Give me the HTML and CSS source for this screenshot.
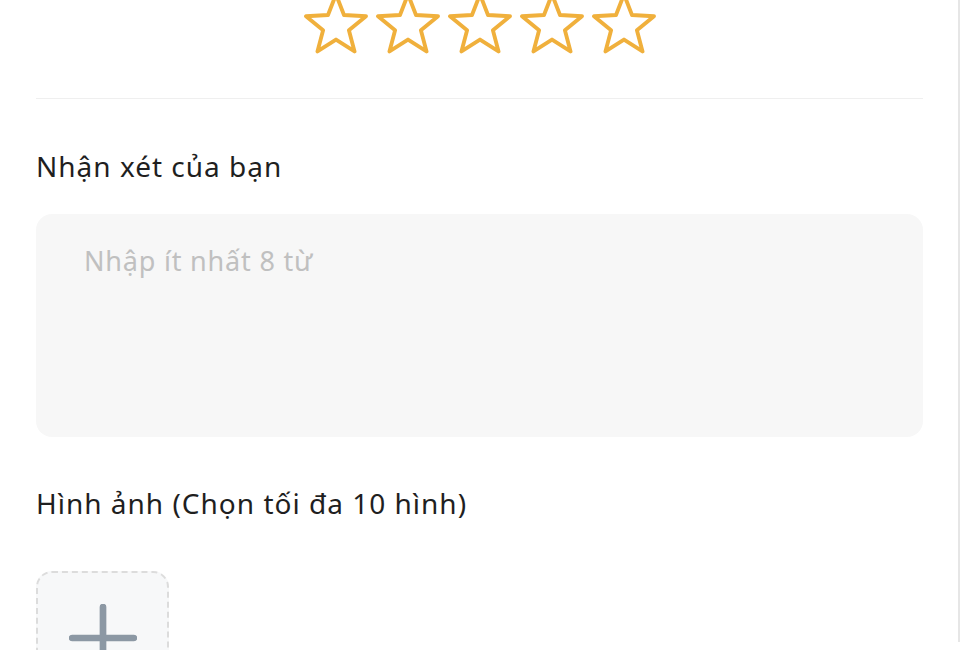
FILE: index.html
```html
<!DOCTYPE html>
<html lang="vi">
<head>
    <meta charset="UTF-8">
    <meta name="viewport" content="width=device-width, initial-scale=1.0">
    <title>Đánh giá sản phẩm</title>
    <link rel="stylesheet" href="styles.css">
</head>
<body>

    <div class="page">
        <div class="stars">
            <svg class="star" viewBox="-34 -34 68 64"><path d="M0 -32.5 L8.23 -11.33 L30.91 -10.04 L13.31 4.33 L19.1 26.29 L0 14 L-19.1 26.29 L-13.31 4.33 L-30.91 -10.04 L-8.23 -11.33 Z"/></svg>
            <svg class="star" viewBox="-34 -34 68 64"><path d="M0 -32.5 L8.23 -11.33 L30.91 -10.04 L13.31 4.33 L19.1 26.29 L0 14 L-19.1 26.29 L-13.31 4.33 L-30.91 -10.04 L-8.23 -11.33 Z"/></svg>
            <svg class="star" viewBox="-34 -34 68 64"><path d="M0 -32.5 L8.23 -11.33 L30.91 -10.04 L13.31 4.33 L19.1 26.29 L0 14 L-19.1 26.29 L-13.31 4.33 L-30.91 -10.04 L-8.23 -11.33 Z"/></svg>
            <svg class="star" viewBox="-34 -34 68 64"><path d="M0 -32.5 L8.23 -11.33 L30.91 -10.04 L13.31 4.33 L19.1 26.29 L0 14 L-19.1 26.29 L-13.31 4.33 L-30.91 -10.04 L-8.23 -11.33 Z"/></svg>
            <svg class="star" viewBox="-34 -34 68 64"><path d="M0 -32.5 L8.23 -11.33 L30.91 -10.04 L13.31 4.33 L19.1 26.29 L0 14 L-19.1 26.29 L-13.31 4.33 L-30.91 -10.04 L-8.23 -11.33 Z"/></svg>
        </div>

        <div class="divider"></div>

        <h2 class="section-title">Nhận xét của bạn</h2>
        <textarea class="review-input" placeholder="Nhập ít nhất 8 từ"></textarea>

        <h2 class="section-title photos-title">Hình ảnh (Chọn tối đa 10 hình)</h2>
        <div class="add-photo">
            <svg class="plus" viewBox="0 0 66 66"><path d="M33 3 V63 M3 33 H63"/></svg>
        </div>
    </div>

</body>
</html>
```

FILE: styles.css
```css
* {
    margin: 0;
    padding: 0;
    box-sizing: border-box;
}

body {
    font-family: 'Noto Sans', sans-serif;
    background: #ffffff;
    color: #1f1f1f;
    overflow: hidden;
    height: 650px;
}

.page {
    width: 960px;
    height: 650px;
    padding: 0 35px 0 36px;
    border-right: 2px solid #e6e6e6;
}

.stars {
    display: flex;
    justify-content: center;
    gap: 6px;
    margin-top: -8px;
}

.star {
    width: 66px;
    height: 64px;
    fill: none;
    stroke: #f0b03c;
    stroke-width: 4;
    stroke-linejoin: round;
}

.divider {
    height: 1px;
    background: #efefef;
    margin-top: 42px;
}

.section-title {
    font-size: 28px;
    font-weight: 400;
    letter-spacing: 1px;
    line-height: 36px;
    margin-top: 49px;
}

.review-input {
    display: block;
    width: 100%;
    height: 223px;
    margin-top: 30px;
    padding: 28px 48px;
    border: none;
    border-radius: 16px;
    background: #f7f7f7;
    font-family: 'Noto Sans', sans-serif;
    font-size: 27px;
    letter-spacing: 0.8px;
    color: #1f1f1f;
    resize: none;
    outline: none;
}

.review-input::placeholder {
    color: #c0c0c0;
}

.photos-title {
    margin-top: 48px;
}

.add-photo {
    width: 133px;
    height: 133px;
    margin-top: 50px;
    border: 2px dashed #dcdcdc;
    border-radius: 16px;
    background: #f7f8f9;
    display: flex;
    justify-content: center;
    align-items: center;
}

.plus {
    width: 68px;
    height: 68px;
    stroke: #8c98a4;
    stroke-width: 6.5;
    stroke-linecap: round;
    fill: none;
}
```
